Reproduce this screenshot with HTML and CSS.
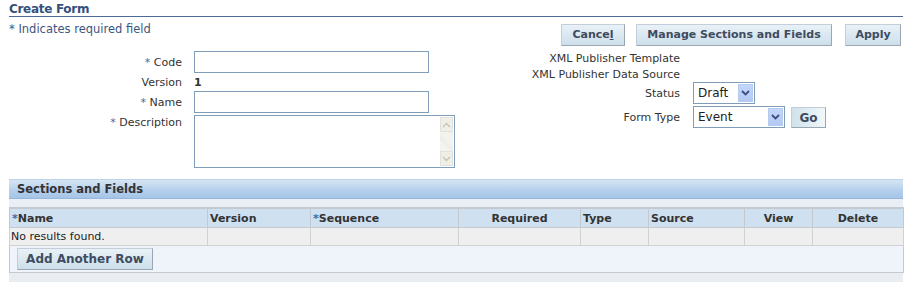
FILE: index.html
```html
<!DOCTYPE html>
<html>
<head>
<meta charset="utf-8">
<link rel="stylesheet" href="styles.css">
</head>
<body>
<div class="page">
  <div class="title">Create Form</div>
  <div class="topbar">
    <div class="req"><span class="ast">*</span> Indicates required field</div>
    <div class="buttons">
      <button class="btn btn-cancel">Cance<u>l</u></button>
      <button class="btn btn-manage">Manage Sections and Fields</button>
      <button class="btn btn-apply">Apply</button>
    </div>
  </div>
  <div class="forms">
    <div class="lform">
      <div class="lbl"><span class="ast">*</span> Code</div>
      <div class="ctl"><div class="input w-code"></div></div>
      <div class="lbl">Version</div>
      <div class="ctl"><span class="val">1</span></div>
      <div class="lbl"><span class="ast">*</span> Name</div>
      <div class="ctl"><div class="input w-code"></div></div>
      <div class="lbl lbl-top"><span class="ast">*</span> Description</div>
      <div class="ctl ctl-gap">
        <div class="textarea">
          <div class="sbar">
            <div class="sbtn">
              <svg width="9" height="6" viewBox="0 0 9 6"><path d="M1 5 L4.5 1.5 L8 5" fill="none" stroke="#c4c4b4" stroke-width="1.4"/></svg>
            </div>
            <div class="strack"></div>
            <div class="sbtn">
              <svg width="9" height="6" viewBox="0 0 9 6"><path d="M1 1 L4.5 4.5 L8 1" fill="none" stroke="#c4c4b4" stroke-width="1.4"/></svg>
            </div>
          </div>
        </div>
      </div>
    </div>
    <div class="rform">
      <div class="rlbl r-txt">XML Publisher Template</div>
      <div class="rctl r-txt"></div>
      <div class="rlbl r-txt">XML Publisher Data Source</div>
      <div class="rctl r-txt"></div>
      <div class="rlbl">Status</div>
      <div class="rctl">
        <div class="select w-draft"><span class="seltext">Draft</span><span class="selbtn"><svg width="9" height="6" viewBox="0 0 9 6"><path d="M1 1 L4.5 4.5 L8 1" fill="none" stroke="#3d4f7a" stroke-width="1.8"/></svg></span></div>
      </div>
      <div class="rlbl r-gap">Form Type</div>
      <div class="rctl r-gap">
        <div class="select w-event"><span class="seltext">Event</span><span class="selbtn"><svg width="9" height="6" viewBox="0 0 9 6"><path d="M1 1 L4.5 4.5 L8 1" fill="none" stroke="#3d4f7a" stroke-width="1.8"/></svg></span></div>
        <button class="btn btn-go">Go</button>
      </div>
    </div>
  </div>
  <div class="section">
    <div class="sechead">Sections and Fields</div>
    <div class="secgap"></div>
    <table class="grid">
      <colgroup>
        <col class="c1"><col class="c2"><col class="c3"><col class="c4"><col class="c5"><col class="c6"><col class="c7"><col class="c8">
      </colgroup>
      <thead>
        <tr>
          <th><span class="ast">*</span>Name</th>
          <th>Version</th>
          <th><span class="ast">*</span>Sequence</th>
          <th class="ctr">Required</th>
          <th>Type</th>
          <th>Source</th>
          <th class="ctr">View</th>
          <th class="ctr">Delete</th>
        </tr>
      </thead>
      <tbody>
        <tr class="empty">
          <td>No results found.</td><td></td><td></td><td></td><td></td><td></td><td></td><td></td>
        </tr>
        <tr class="foot">
          <td colspan="8"><button class="btn btn-add">Add Another Row</button></td>
        </tr>
      </tbody>
    </table>
    <div class="secbottom"></div>
  </div>
</div>
</body>
</html>
```
FILE: styles.css
```css
html, body {
  margin: 0;
  padding: 0;
  background: #ffffff;
}
body {
  font-family: "DejaVu Sans", Verdana, sans-serif;
  font-size: 11px;
  color: #333333;
}
.page {
  padding: 2px 6px 0 9px;
}
.title {
  font-size: 12px;
  font-weight: bold;
  color: #34507c;
  line-height: 14px;
  border-bottom: 1px solid #4d6b97;
  letter-spacing: -0.3px;
}
.ast {
  color: #3d6aa6;
}
.topbar {
  display: flex;
  justify-content: space-between;
  align-items: flex-start;
  height: 33px;
}
.req {
  color: #3d5680;
  line-height: 14px;
  margin-top: 5px;
  font-size: 11.5px;
}
.req .ast {
  color: #3d5680;
}
.buttons {
  display: flex;
  gap: 11px;
  margin-top: 7px;
  margin-right: 2px;
}
.btn {
  font-family: "DejaVu Sans", Verdana, sans-serif;
  font-size: 11px;
  font-weight: bold;
  color: #3e4c60;
  height: 22px;
  padding: 0 8px;
  border: 1px solid #9aa6b4;
  border-top-color: #c3ced9;
  border-left-color: #c3ced9;
  background: linear-gradient(#e9f1f7, #cddfeb);
  line-height: 20px;
  margin: 0;
  cursor: default;
}
.btn u {
  text-decoration: underline;
}
.btn-cancel { width: 64px; }
.btn-manage { width: 196px; }
.btn-apply { width: 56px; margin-left: 2px; }

.forms {
  display: flex;
  align-items: flex-start;
}
.lform {
  width: 451px;
  display: grid;
  grid-template-columns: 173px auto;
  column-gap: 12px;
  padding-top: 1px;
}
.lbl {
  text-align: right;
  align-self: center;
  white-space: nowrap;
}
.lbl-top {
  align-self: start;
  line-height: 15px;
  margin-top: 2px;
}
.ctl {
  display: flex;
  align-items: center;
  min-height: 18px;
}
.ctl-gap {
  margin-top: 2px;
}
.val {
  font-weight: bold;
  color: #333;
}
.input {
  height: 20px;
  border: 1px solid #7f9db9;
  background: #fff;
}
.w-code {
  width: 233px;
}
.textarea {
  width: 258px;
  height: 49px;
  border: 1px solid #7f9db9;
  background: #fff;
  display: flex;
  justify-content: flex-end;
  padding: 1px 1px 1px 0;
  box-sizing: content-box;
}
.sbar {
  width: 13px;
  display: flex;
  flex-direction: column;
  background: repeating-linear-gradient(45deg, #f6f6f2 0 1px, #ececE6 1px 2px);
}
.sbtn {
  height: 15px;
  background: #efefe8;
  border: 1px solid #e2e2da;
  box-sizing: border-box;
  display: flex;
  align-items: center;
  justify-content: center;
}
.strack {
  flex: 1;
}

.rform {
  display: grid;
  grid-template-columns: 220px auto;
  column-gap: 13px;
}
.rlbl {
  text-align: right;
  white-space: nowrap;
  align-self: center;
}
.r-txt {
  height: 16px;
  line-height: 17px;
}
.rctl {
  display: flex;
  align-items: center;
}
.r-gap {
  margin-top: 2px;
}
.select {
  height: 20px;
  border: 1px solid #7f9db9;
  background: #fff;
  display: flex;
  align-items: center;
  justify-content: space-between;
  padding: 0 1px 0 0;
  font-size: 12px;
  color: #222;
}
.w-draft { width: 59px; }
.w-event { width: 89px; }
.seltext {
  padding-left: 4px;
}
.selbtn {
  width: 15px;
  height: 18px;
  background: linear-gradient(#c3d6fb, #b2c9f6);
  border: 1px solid #b7cbef;
  box-sizing: border-box;
  display: flex;
  align-items: center;
  justify-content: center;
}
.btn-go {
  width: 35px;
  height: 21px;
  margin-left: 6px;
  padding: 0;
  font-size: 12px;
  background: linear-gradient(90deg, #cfe2ec, #f2f8fa);
}

.section {
  margin-top: 11px;
  width: 894px;
}
.sechead {
  height: 18px;
  line-height: 18px;
  background: linear-gradient(#d6e5f4, #b4cfec 60%, #a6c4e6);
  border-top: 1px solid #bdd3ea;
  border-bottom: 1px solid #97b8de;
  padding-left: 8px;
  font-size: 11.5px;
  font-weight: bold;
  color: #333;
}
.secgap {
  height: 8px;
  background: #e9eff5;
}
.grid {
  width: 100%;
  border-collapse: collapse;
  table-layout: fixed;
  font-size: 11px;
}
.c1 { width: 198px; }
.c2 { width: 103px; }
.c3 { width: 148px; }
.c4 { width: 122px; }
.c5 { width: 68px; }
.c6 { width: 96px; }
.c7 { width: 68px; }
.c8 { width: 91px; }
.grid th {
  height: 18px;
  background: #cfe0f1;
  border: 1px solid #c4c9cf;
  border-top: 2px solid #c4c9cf;
  text-align: left;
  font-weight: bold;
  color: #333;
  padding: 0 2px;
  white-space: nowrap;
}
.grid th.ctr {
  text-align: center;
}
.grid .empty td {
  height: 17px;
  background: #efefef;
  border: 1px solid #cfd1d4;
  padding: 0 1px;
  color: #222;
  white-space: nowrap;
}
.grid .foot td {
  height: 26px;
  background: #eef4fa;
  border: 1px solid #c4c9cf;
  padding: 0 0 0 7px;
}
.btn-add {
  width: 136px;
  height: 22px;
  font-size: 12px;
  padding: 0;
  display: block;
}
.secbottom {
  height: 9px;
  background: #e9edf1;
}
```
